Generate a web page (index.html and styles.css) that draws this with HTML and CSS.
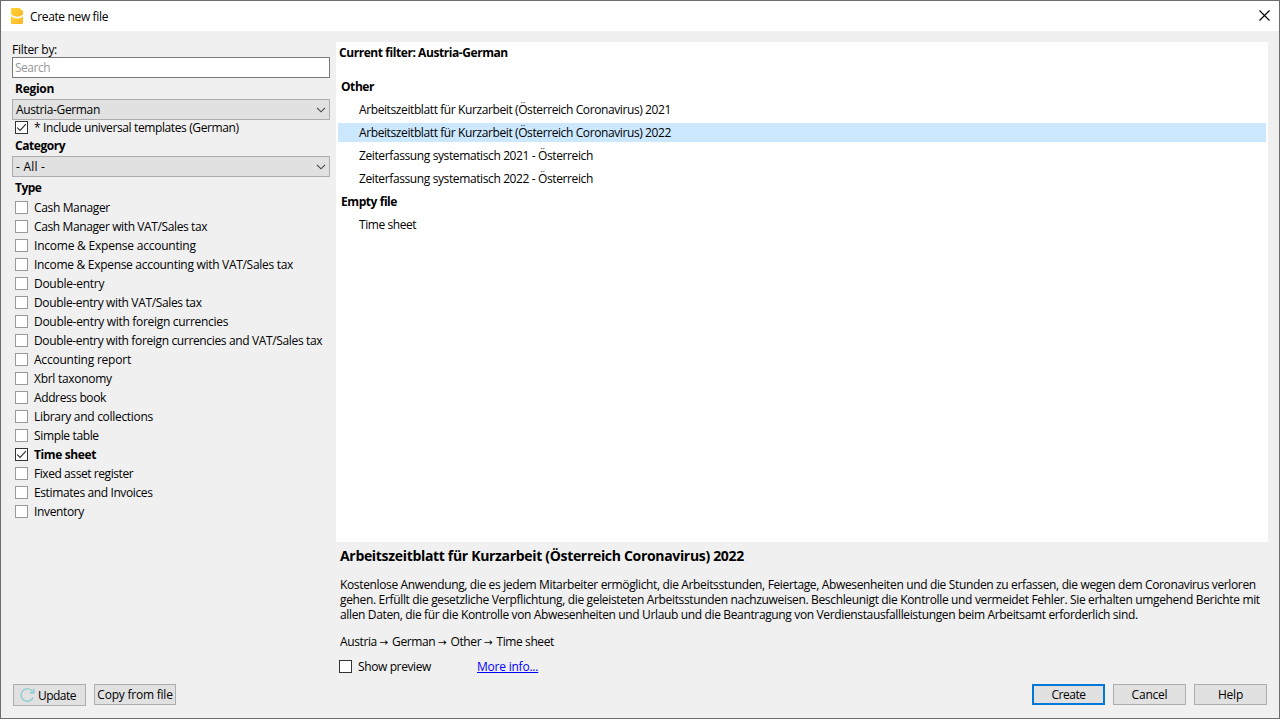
FILE: index.html
```
<!DOCTYPE html>
<html lang="en">
<head>
<meta charset="utf-8">
<title>Create new file</title>
<link rel="stylesheet" href="styles.css">
</head>
<body>
<svg class="defs" width="0" height="0">
  <symbol id="tick" viewBox="0 0 11 11"><path d="M1.2 5.6 4.1 8.4 9.9 2.2" fill="none" stroke="#333" stroke-width="1.2"/></symbol>
  <symbol id="chevron" viewBox="0 0 10 6"><path d="M1 .8 5 4.8 9 .8" fill="none" stroke="#444" stroke-width="1.1"/></symbol>
</svg>
<div class="dialog">
  <header class="titlebar">
    <svg class="app-icon" width="12" height="16" viewBox="0 0 12 16">
      <defs><linearGradient id="gold" x1="0" y1="0" x2="1" y2="1"><stop offset="0" stop-color="#ffd52e"/><stop offset="1" stop-color="#fbb62c"/></linearGradient></defs>
      <path d="M0 1Q0 0 1 0H8.5L12 3.3V6.4Q9.5 8.7 6 8.7T0 6Z" fill="url(#gold)"/>
      <path d="M0 8Q2.5 10.4 6 10.4T12 8.2V15Q12 16 11 16H1Q0 16 0 15Z" fill="url(#gold)"/>
    </svg>
    <span class="caption">Create new file</span>
    <svg class="close" width="11" height="11" viewBox="0 0 11 11"><path d="M.5.5 10.5 10.5M10.5.5.5 10.5" stroke="#000" stroke-width="1.15"/></svg>
  </header>
  <div class="content">
    <aside class="filters">
      <label class="filter-label n28">Filter by:</label>
      <div class="search"><span class="n50">Search</span></div>
      <h2 class="n28">Region</h2>
      <div class="select"><span>Austria-German</span><svg width="10" height="6"><use href="#chevron"/></svg></div>
      <div class="check universal"><i class="box on"><svg width="11" height="11"><use href="#tick"/></svg></i><span class="n38">* Include universal templates (German)</span></div>
      <h2 class="n43">Category</h2>
      <div class="select"><span class="n0">- All -</span><svg width="10" height="6"><use href="#chevron"/></svg></div>
      <h2 class="n50">Type</h2>
      <div class="types">
        <div class="check"><i class="box"></i><span>Cash Manager</span></div>
        <div class="check"><i class="box"></i><span class="n38">Cash Manager with VAT/Sales tax</span></div>
        <div class="check"><i class="box"></i><span class="n22">Income &amp; Expense accounting</span></div>
        <div class="check"><i class="box"></i><span class="n30">Income &amp; Expense accounting with VAT/Sales tax</span></div>
        <div class="check"><i class="box"></i><span class="n28">Double-entry</span></div>
        <div class="check"><i class="box"></i><span>Double-entry with VAT/Sales tax</span></div>
        <div class="check"><i class="box"></i><span class="n30">Double-entry with foreign currencies</span></div>
        <div class="check"><i class="box"></i><span>Double-entry with foreign currencies and VAT/Sales tax</span></div>
        <div class="check"><i class="box"></i><span class="n22">Accounting report</span></div>
        <div class="check"><i class="box"></i><span class="n28">Xbrl taxonomy</span></div>
        <div class="check"><i class="box"></i><span class="n38">Address book</span></div>
        <div class="check"><i class="box"></i><span class="n30">Library and collections</span></div>
        <div class="check"><i class="box"></i><span>Simple table</span></div>
        <div class="check selected"><i class="box on"><svg width="11" height="11"><use href="#tick"/></svg></i><span class="n38">Time sheet</span></div>
        <div class="check"><i class="box"></i><span class="n43">Fixed asset register</span></div>
        <div class="check"><i class="box"></i><span class="n38">Estimates and Invoices</span></div>
        <div class="check"><i class="box"></i><span>Inventory</span></div>
      </div>
    </aside>
    <main class="panel">
      <div class="results">
        <div class="current n43">Current filter: Austria-German</div>
        <div class="tree">
          <div class="group n43">Other</div>
          <div class="item n40">Arbeitszeitblatt für Kurzarbeit (Österreich Coronavirus) 2021</div>
          <div class="item active n40">Arbeitszeitblatt für Kurzarbeit (Österreich Coronavirus) 2022</div>
          <div class="item n38">Zeiterfassung systematisch 2021 - Österreich</div>
          <div class="item n38">Zeiterfassung systematisch 2022 - Österreich</div>
          <div class="group n43">Empty file</div>
          <div class="item n43">Time sheet</div>
        </div>
      </div>
      <div class="details">
        <h1>Arbeitszeitblatt für Kurzarbeit (Österreich Coronavirus) 2022</h1>
        <p class="description">Kostenlose Anwendung, die es jedem Mitarbeiter ermöglicht, die Arbeitsstunden, Feiertage, Abwesenheiten und die Stunden zu erfassen, die wegen dem Coronavirus verloren<br><span class="n34">gehen. Erfüllt die gesetzliche Verpflichtung, die geleisteten Arbeitsstunden nachzuweisen. Beschleunigt die Kontrolle und vermeidet Fehler. Sie erhalten umgehend Berichte mit</span><br>allen Daten, die für die Kontrolle von Abwesenheiten und Urlaub und die Beantragung von Verdienstausfallleistungen beim Arbeitsamt erforderlich sind.</p>
        <p class="path">Austria <b class="arrow">→</b> German <b class="arrow">→</b> Other <b class="arrow">→</b> Time sheet</p>
        <div class="preview"><div class="check"><i class="box dark"></i><span class="n38">Show preview</span></div><a class="more n22">More info...</a></div>
      </div>
    </main>
  </div>
  <footer class="buttons">
    <div class="btn update">
      <svg width="15" height="15" viewBox="0 0 15 15" fill="none" stroke="#7fc8d0" stroke-width="1.2"><path d="M13.2 9.3A6.3 6.3 0 1 1 12.6 3.6M13.9.8V4.9H9.6"/></svg>
      <span class="n50">Update</span>
    </div>
    <div class="btn copy n22">Copy from file</div>
    <div class="btn primary n48">Create</div>
    <div class="btn n22">Cancel</div>
    <div class="btn n22">Help</div>
  </footer>
</div>
</body>
</html>
```
FILE: styles.css
```
* { box-sizing: border-box; }
body { margin: 0; font: 12px/15px "Open Sans", sans-serif; letter-spacing: -.355px; color: #000; }
h1, h2, p { margin: 0; }
svg { display: block; flex: none; }
.defs { position: absolute; }
.dialog { width: 1280px; height: 719px; border: 1px solid #6d6b6d; background: #f0f0f0; display: flex; flex-direction: column; white-space: nowrap; }

/* letter-spacing steps */
.n0 { letter-spacing: .2px; }
.n22 { letter-spacing: -.22px; }
.n28 { letter-spacing: -.28px; }
.n30 { letter-spacing: -.3px; }
.n34 { letter-spacing: -.34px; }
.n38 { letter-spacing: -.385px; }
.n40 { letter-spacing: -.397px; }
.n43 { letter-spacing: -.43px; }
.n48 { letter-spacing: -.45px; }
.n50 { letter-spacing: -.5px; }

.titlebar { height: 30px; flex: none; background: #fff; display: flex; align-items: center; padding: 0 9px 0 10px; }
.caption { margin-left: 7px; flex: 1; }
.app-icon { margin-top: -1px; }
.close { margin-top: -2px; }

.content { display: flex; flex: 1; padding: 11px 11px 0 11px; gap: 6px; }
.filters { width: 318px; flex: none; }
.filter-label { display: block; height: 15px; line-height: 16px; }
.search { height: 21px; border: 1px solid #7a7a7a; background: #fff; color: #999; padding: 0 2px; line-height: 20px; }
h2 { height: 21px; padding-left: 3px; font-size: 12px; line-height: 21px; }
.select { height: 21px; border: 1px solid #adadad; background: #e1e1e1; padding: 0 3px; display: flex; align-items: center; justify-content: space-between; line-height: 19px; }
.check { height: 19px; padding-left: 3px; display: flex; align-items: center; gap: 6px; }
.check.universal { height: 15px; }
.check.selected { font-weight: bold; }
.box { width: 13px; height: 13px; flex: none; border: 1px solid #999; background: #fff; }
.box.on, .box.dark { border-color: #333; }

.panel { flex: 1; min-width: 0; }
.results { height: 500px; background: #fff; padding: 0 2px; }
.current { height: 35px; padding-left: 1px; font-weight: bold; line-height: 22px; }
.tree { display: flex; flex-direction: column; gap: 4px; }
.group, .item { height: 19px; line-height: 19px; }
.group { padding-left: 3px; font-weight: bold; }
.item { padding-left: 21px; }
.item.active { background: #cce8ff; }

.details { padding-left: 4px; }
h1 { height: 35px; font-size: 14px; line-height: 27px; letter-spacing: -.32px; }
.path { margin-top: 12px; letter-spacing: -.39px; }
.arrow { display: inline-block; width: 9.8px; font: 10.5px/12px "DejaVu Sans", sans-serif; letter-spacing: 0; }
.preview { display: flex; align-items: center; margin-top: 8px; }
.preview .check { width: 137px; padding-left: 0; margin-left: -1px; }
.more { margin-left: 1px; color: #00f; text-decoration: underline; }

.buttons { height: 34px; flex: none; display: flex; align-items: flex-start; gap: 8px; padding: 0 12px; }
.btn { width: 73px; height: 21px; border: 1px solid #adadad; background: #e1e1e1; display: flex; align-items: center; justify-content: center; }
.btn.primary { border: 2px solid #0078d7; }
.btn.update { height: 22px; gap: 3px; padding-right: 3px; }
.btn.copy { width: 82px; margin-right: auto; }
```
